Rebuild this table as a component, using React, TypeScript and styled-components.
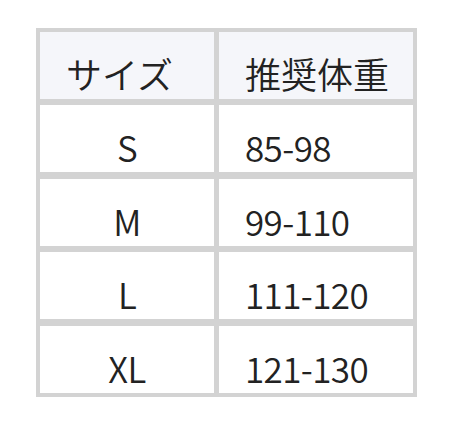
import React from 'react';
import styled, {createGlobalStyle} from 'styled-components';

const GlobalStyle = createGlobalStyle`
	html, body {
		margin: 0;
		padding: 0;
		background: #ffffff;
	}
	body {
		font-family: 'Noto Sans CJK JP', 'Noto Sans', sans-serif;
		color: #222222;
	}
`;

const Page = styled.div`
	padding: 28px 0 0 36px;
`;

const SizeTable = styled.div`
	display: grid;
	grid-template-columns: 174px 194px;
	grid-auto-rows: 67px;
	column-gap: 5px;
	row-gap: 6.4px;
	width: fit-content;
	padding: 4px;
	background: #d3d3d3;
`;

const Cell = styled.div<{$head?: boolean; $center?: boolean}>`
	display: flex;
	align-items: flex-end;
	justify-content: ${(p) => (p.$center ? 'center' : 'flex-start')};
	padding: 0 0 4px ${(p) => (p.$center ? '0' : '26px')};
	background: ${(p) => (p.$head ? '#f5f6fa' : '#ffffff')};
	font-size: ${(p) => (p.$head ? '36px' : '35px')};
	font-weight: 350;
	letter-spacing: ${(p) => (p.$head ? '0' : '-0.6px')};
	line-height: 1.2;
	white-space: nowrap;
`;

const rows = [
	['S', '85-98'],
	['M', '99-110'],
	['L', '111-120'],
	['XL', '121-130'],
];

export default function App() {
	return (
		<Page>
			<GlobalStyle />
			<SizeTable>
				<Cell $head>サイズ</Cell>
				<Cell $head>推奨体重</Cell>
				{rows.map(([size, weight]) => (
					<React.Fragment key={size}>
						<Cell $center>{size}</Cell>
						<Cell>{weight}</Cell>
					</React.Fragment>
				))}
			</SizeTable>
		</Page>
	);
}
